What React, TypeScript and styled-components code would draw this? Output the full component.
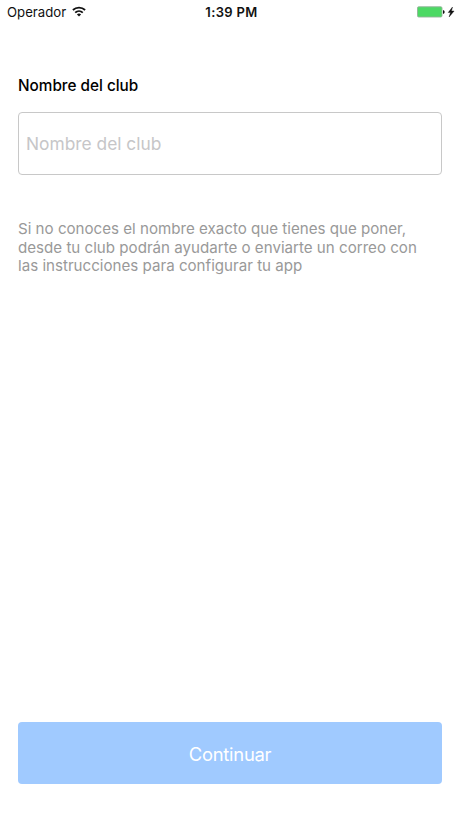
import React from 'react';
import styled, { createGlobalStyle } from 'styled-components';

const GlobalStyle = createGlobalStyle`
  * { box-sizing: border-box; }
  body { margin: 0; background: #fff; font-family: Inter, "Liberation Sans", sans-serif; }
`;

const Screen = styled.div`
  width: 460px;
  height: 818px;
  display: flex;
  flex-direction: column;
  background: #fff;
`;

const StatusBar = styled.header`
  height: 24px;
  display: grid;
  grid-template-columns: 1fr auto 1fr;
  align-items: center;
  padding: 0 5px 0 7px;
  color: #111;
`;

const Carrier = styled.div`
  display: flex;
  align-items: center;
  gap: 6px;
  font-size: 13.2px;
`;

const WifiIcon = styled.svg`
  margin-bottom: 1px;
`;

const Clock = styled.div`
  padding-left: 1px;
  font-size: 13px;
  font-weight: 600;
  letter-spacing: 0.35px;
`;

const Power = styled.div`
  display: flex;
  justify-content: flex-end;
`;

const Content = styled.main`
  flex: 1;
  display: flex;
  flex-direction: column;
  padding: 52px 18px 34px;
`;

const Label = styled.label`
  font-size: 15.3px;
  line-height: 20px;
  font-weight: 500;
  color: #000;
`;

const ClubInput = styled.input`
  height: 63px;
  margin-top: 16px;
  padding: 0 7px;
  border: 1px solid #c8c8c8;
  border-radius: 4px;
  font: 17.35px Inter, sans-serif;
  outline: none;
  &::placeholder { color: #c6c6c8; opacity: 1; }
`;

const Hint = styled.p`
  margin: 45px 0 0;
  font-size: 15.13px;
  line-height: 18.5px;
  color: #999;
  white-space: nowrap;
`;

const ContinueButton = styled.button`
  margin-top: auto;
  height: 62px;
  padding: 1px 0 0;
  border: 0;
  border-radius: 4px;
  background: #a0caff;
  color: #fff;
  font: 18.4px Inter, sans-serif;
  letter-spacing: -0.25px;
`;

export default function App() {
  return (
    <Screen>
      <GlobalStyle />
      <StatusBar>
        <Carrier>
          <span>Operador</span>
          <WifiIcon width="14" height="11" viewBox="0 0 14 11" fill="none" stroke="#111" strokeWidth="1.8">
            <path d="M.9 4a8.800 8.800 0 0 1 12.200 0M3.200 6.600a5.500 5.500 0 0 1 7.600 0" />
            <path d="M7 10.600 4.900 8.500a3 3 0 0 1 4.200 0z" fill="#111" stroke="none" />
          </WifiIcon>
        </Carrier>
        <Clock>1:39 PM</Clock>
        <Power>
          <svg width="38" height="12" viewBox="0 0 38 12">
            <rect x=".5" y=".8" width="24.500" height="10.200" rx="1.200" fill="#4cd964" stroke="#93b298" strokeWidth=".9" />
            <path d="M26 4v4q1.700-.3 1.700-2T26 4" fill="#111" />
            <path d="M35.500 1 31.200 6.500h2.300L32.100 11l5-6h-2.600z" fill="#111" stroke="#111" strokeWidth=".4" />
          </svg>
        </Power>
      </StatusBar>
      <Content>
        <Label htmlFor="club">Nombre del club</Label>
        <ClubInput id="club" placeholder="Nombre del club" />
        <Hint>
          Si no conoces el nombre exacto que tienes que poner,<br />
          desde tu club podrán ayudarte o enviarte un correo con<br />
          las instrucciones para configurar tu app
        </Hint>
        <ContinueButton>Continuar</ContinueButton>
      </Content>
    </Screen>
  );
}
